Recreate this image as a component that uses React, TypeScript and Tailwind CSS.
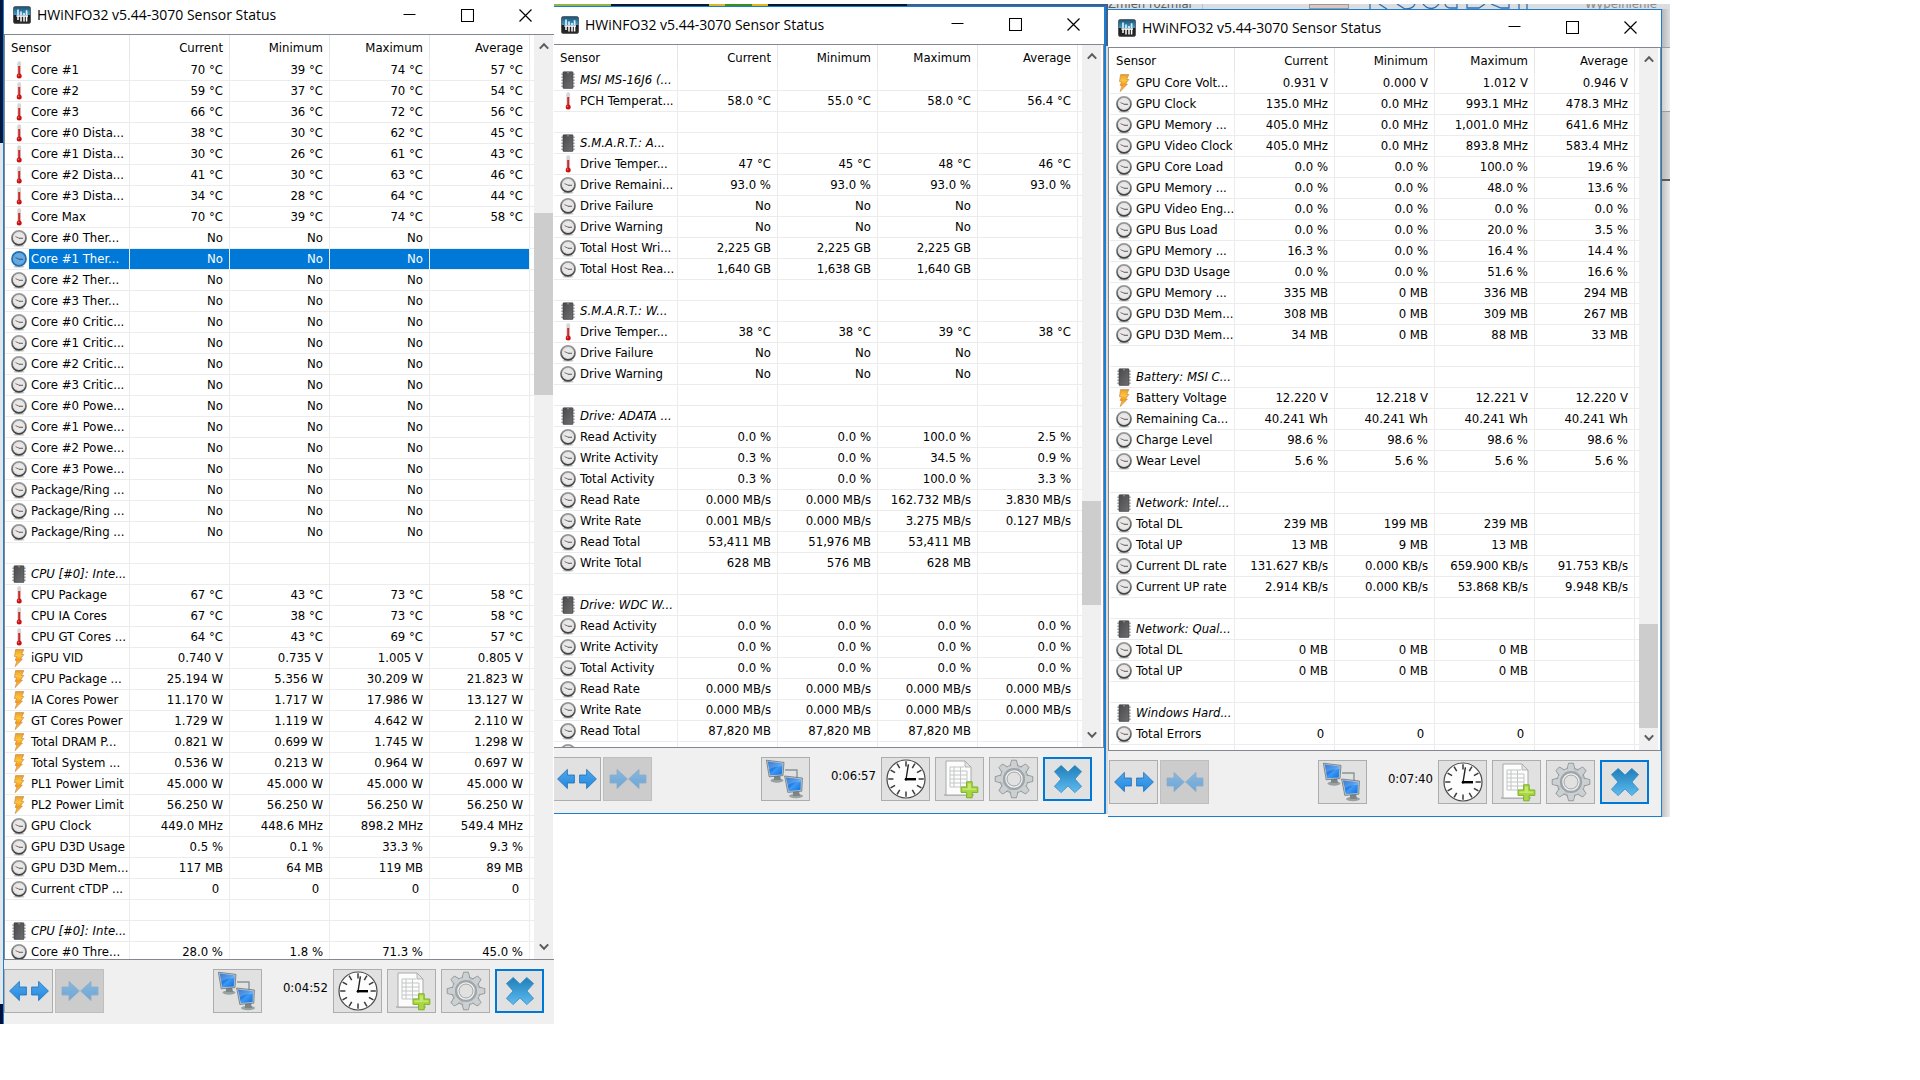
import React from "react";

type Kind = "temp" | "gauge" | "bolt" | "chip" | "blank";
type Row = [Kind, string, ...string[]];

const no = (name: string): Row => ["gauge", name, "No", "No", "No", ""];

const cpuRows: Row[] = [
  ["temp", "Core #1", "70 °C", "39 °C", "74 °C", "57 °C"],
  ["temp", "Core #2", "59 °C", "37 °C", "70 °C", "54 °C"],
  ["temp", "Core #3", "66 °C", "36 °C", "72 °C", "56 °C"],
  ["temp", "Core #0 Dista...", "38 °C", "30 °C", "62 °C", "45 °C"],
  ["temp", "Core #1 Dista...", "30 °C", "26 °C", "61 °C", "43 °C"],
  ["temp", "Core #2 Dista...", "41 °C", "30 °C", "63 °C", "46 °C"],
  ["temp", "Core #3 Dista...", "34 °C", "28 °C", "64 °C", "44 °C"],
  ["temp", "Core Max", "70 °C", "39 °C", "74 °C", "58 °C"],
  no("Core #0 Ther..."),
  no("Core #1 Ther..."),
  no("Core #2 Ther..."),
  no("Core #3 Ther..."),
  no("Core #0 Critic..."),
  no("Core #1 Critic..."),
  no("Core #2 Critic..."),
  no("Core #3 Critic..."),
  no("Core #0 Powe..."),
  no("Core #1 Powe..."),
  no("Core #2 Powe..."),
  no("Core #3 Powe..."),
  no("Package/Ring ..."),
  no("Package/Ring ..."),
  no("Package/Ring ..."),
  ["blank", ""],
  ["chip", "CPU [#0]: Inte..."],
  ["temp", "CPU Package", "67 °C", "43 °C", "73 °C", "58 °C"],
  ["temp", "CPU IA Cores", "67 °C", "38 °C", "73 °C", "58 °C"],
  ["temp", "CPU GT Cores ...", "64 °C", "43 °C", "69 °C", "57 °C"],
  ["bolt", "iGPU VID", "0.740 V", "0.735 V", "1.005 V", "0.805 V"],
  ["bolt", "CPU Package ...", "25.194 W", "5.356 W", "30.209 W", "21.823 W"],
  ["bolt", "IA Cores Power", "11.170 W", "1.717 W", "17.986 W", "13.127 W"],
  ["bolt", "GT Cores Power", "1.729 W", "1.119 W", "4.642 W", "2.110 W"],
  ["bolt", "Total DRAM P...", "0.821 W", "0.699 W", "1.745 W", "1.298 W"],
  ["bolt", "Total System ...", "0.536 W", "0.213 W", "0.964 W", "0.697 W"],
  ["bolt", "PL1 Power Limit", "45.000 W", "45.000 W", "45.000 W", "45.000 W"],
  ["bolt", "PL2 Power Limit", "56.250 W", "56.250 W", "56.250 W", "56.250 W"],
  ["gauge", "GPU Clock", "449.0 MHz", "448.6 MHz", "898.2 MHz", "549.4 MHz"],
  ["gauge", "GPU D3D Usage", "0.5 %", "0.1 %", "33.3 %", "9.3 %"],
  ["gauge", "GPU D3D Mem...", "117 MB", "64 MB", "119 MB", "89 MB"],
  ["gauge", "Current cTDP ...", "0 ", "0 ", "0 ", "0 "],
  ["blank", ""],
  ["chip", "CPU [#0]: Inte..."],
  ["gauge", "Core #0 Thre...", "28.0 %", "1.8 %", "71.3 %", "45.0 %"],
];

const driveRows: Row[] = [
  ["chip", "MSI MS-16J6 (..."],
  ["temp", "PCH Temperat...", "58.0 °C", "55.0 °C", "58.0 °C", "56.4 °C"],
  ["blank", ""],
  ["chip", "S.M.A.R.T.: A..."],
  ["temp", "Drive Temper...", "47 °C", "45 °C", "48 °C", "46 °C"],
  ["gauge", "Drive Remaini...", "93.0 %", "93.0 %", "93.0 %", "93.0 %"],
  no("Drive Failure"),
  no("Drive Warning"),
  ["gauge", "Total Host Wri...", "2,225 GB", "2,225 GB", "2,225 GB", ""],
  ["gauge", "Total Host Rea...", "1,640 GB", "1,638 GB", "1,640 GB", ""],
  ["blank", ""],
  ["chip", "S.M.A.R.T.: W..."],
  ["temp", "Drive Temper...", "38 °C", "38 °C", "39 °C", "38 °C"],
  no("Drive Failure"),
  no("Drive Warning"),
  ["blank", ""],
  ["chip", "Drive: ADATA ..."],
  ["gauge", "Read Activity", "0.0 %", "0.0 %", "100.0 %", "2.5 %"],
  ["gauge", "Write Activity", "0.3 %", "0.0 %", "34.5 %", "0.9 %"],
  ["gauge", "Total Activity", "0.3 %", "0.0 %", "100.0 %", "3.3 %"],
  ["gauge", "Read Rate", "0.000 MB/s", "0.000 MB/s", "162.732 MB/s", "3.830 MB/s"],
  ["gauge", "Write Rate", "0.001 MB/s", "0.000 MB/s", "3.275 MB/s", "0.127 MB/s"],
  ["gauge", "Read Total", "53,411 MB", "51,976 MB", "53,411 MB", ""],
  ["gauge", "Write Total", "628 MB", "576 MB", "628 MB", ""],
  ["blank", ""],
  ["chip", "Drive: WDC W..."],
  ["gauge", "Read Activity", "0.0 %", "0.0 %", "0.0 %", "0.0 %"],
  ["gauge", "Write Activity", "0.0 %", "0.0 %", "0.0 %", "0.0 %"],
  ["gauge", "Total Activity", "0.0 %", "0.0 %", "0.0 %", "0.0 %"],
  ["gauge", "Read Rate", "0.000 MB/s", "0.000 MB/s", "0.000 MB/s", "0.000 MB/s"],
  ["gauge", "Write Rate", "0.000 MB/s", "0.000 MB/s", "0.000 MB/s", "0.000 MB/s"],
  ["gauge", "Read Total", "87,820 MB", "87,820 MB", "87,820 MB", ""],
  ["gauge", ""],
];

const gpuRows: Row[] = [
  ["bolt", "GPU Core Volt...", "0.931 V", "0.000 V", "1.012 V", "0.946 V"],
  ["gauge", "GPU Clock", "135.0 MHz", "0.0 MHz", "993.1 MHz", "478.3 MHz"],
  ["gauge", "GPU Memory ...", "405.0 MHz", "0.0 MHz", "1,001.0 MHz", "641.6 MHz"],
  ["gauge", "GPU Video Clock", "405.0 MHz", "0.0 MHz", "893.8 MHz", "583.4 MHz"],
  ["gauge", "GPU Core Load", "0.0 %", "0.0 %", "100.0 %", "19.6 %"],
  ["gauge", "GPU Memory ...", "0.0 %", "0.0 %", "48.0 %", "13.6 %"],
  ["gauge", "GPU Video Eng...", "0.0 %", "0.0 %", "0.0 %", "0.0 %"],
  ["gauge", "GPU Bus Load", "0.0 %", "0.0 %", "20.0 %", "3.5 %"],
  ["gauge", "GPU Memory ...", "16.3 %", "0.0 %", "16.4 %", "14.4 %"],
  ["gauge", "GPU D3D Usage", "0.0 %", "0.0 %", "51.6 %", "16.6 %"],
  ["gauge", "GPU Memory ...", "335 MB", "0 MB", "336 MB", "294 MB"],
  ["gauge", "GPU D3D Mem...", "308 MB", "0 MB", "309 MB", "267 MB"],
  ["gauge", "GPU D3D Mem...", "34 MB", "0 MB", "88 MB", "33 MB"],
  ["blank", ""],
  ["chip", "Battery: MSI C..."],
  ["bolt", "Battery Voltage", "12.220 V", "12.218 V", "12.221 V", "12.220 V"],
  ["gauge", "Remaining Ca...", "40.241 Wh", "40.241 Wh", "40.241 Wh", "40.241 Wh"],
  ["gauge", "Charge Level", "98.6 %", "98.6 %", "98.6 %", "98.6 %"],
  ["gauge", "Wear Level", "5.6 %", "5.6 %", "5.6 %", "5.6 %"],
  ["blank", ""],
  ["chip", "Network: Intel..."],
  ["gauge", "Total DL", "239 MB", "199 MB", "239 MB", ""],
  ["gauge", "Total UP", "13 MB", "9 MB", "13 MB", ""],
  ["gauge", "Current DL rate", "131.627 KB/s", "0.000 KB/s", "659.900 KB/s", "91.753 KB/s"],
  ["gauge", "Current UP rate", "2.914 KB/s", "0.000 KB/s", "53.868 KB/s", "9.948 KB/s"],
  ["blank", ""],
  ["chip", "Network: Qual..."],
  ["gauge", "Total DL", "0 MB", "0 MB", "0 MB", ""],
  ["gauge", "Total UP", "0 MB", "0 MB", "0 MB", ""],
  ["blank", ""],
  ["chip", "Windows Hard..."],
  ["gauge", "Total Errors", "0 ", "0 ", "0 ", ""],
  ["blank", ""],
];

function Gradients() {
  return (
    <svg className="absolute h-0 w-0" aria-hidden="true">
      <defs>
        <linearGradient id="boltFill" x1="0" y1="0" x2="0" y2="1">
          <stop offset="0" stopColor="#e8a032" />
          <stop offset="0.35" stopColor="#ffc53a" />
          <stop offset="0.6" stopColor="#f79a1c" />
          <stop offset="1" stopColor="#ffd45a" />
        </linearGradient>
        <linearGradient id="logoFill" x1="0" y1="0" x2="0" y2="1">
          <stop offset="0" stopColor="#1d4f6e" />
          <stop offset="0.5" stopColor="#3f9cc8" />
          <stop offset="0.52" stopColor="#1a1a1a" />
          <stop offset="1" stopColor="#2b2b2b" />
        </linearGradient>
        <linearGradient id="chipFill" x1="0" y1="0" x2="1" y2="1">
          <stop offset="0" stopColor="#4a4a4d" />
          <stop offset="1" stopColor="#6f6f72" />
        </linearGradient>
        <linearGradient id="ringFill" x1="0" y1="0" x2="0" y2="1">
          <stop offset="0" stopColor="#9a9a9a" />
          <stop offset="1" stopColor="#404040" />
        </linearGradient>
        <linearGradient id="arrowFill" x1="0" y1="0" x2="0" y2="1">
          <stop offset="0" stopColor="#4fa6ec" />
          <stop offset="1" stopColor="#2389e0" />
        </linearGradient>
        <linearGradient id="screenFill" x1="0" y1="0" x2="1" y2="1">
          <stop offset="0" stopColor="#0a56c4" />
          <stop offset="0.5" stopColor="#2a86ea" />
          <stop offset="0.55" stopColor="#3f9af5" />
          <stop offset="1" stopColor="#0e6fe0" />
        </linearGradient>
        <linearGradient id="gearFill" x1="0" y1="0" x2="1" y2="1">
          <stop offset="0" stopColor="#e2e5e6" />
          <stop offset="0.5" stopColor="#b4b9bc" />
          <stop offset="1" stopColor="#dfe2e3" />
        </linearGradient>
        <linearGradient id="crossFill" x1="0" y1="0" x2="0" y2="1">
          <stop offset="0" stopColor="#1f7db8" />
          <stop offset="1" stopColor="#5ebcf2" />
        </linearGradient>
      </defs>
    </svg>
  );
}

function SensorIcon({ kind, selected }: { kind: Kind; selected?: boolean }) {
  if (kind === "blank") return null;
  return (
    <svg viewBox="0 0 16 18" className="h-[18px] w-4 shrink-0" aria-hidden="true">
      {kind === "temp" && (
        <>
          <rect x="6.3" y="0.3" width="3.8" height="14" rx="1.6" fill="#d6d6d6" />
          <rect x="7.2" y="5" width="2" height="9" fill="#cf2a2a" />
          <circle cx="8.2" cy="15" r="2.5" fill="#cb1010" />
          <circle cx="7.6" cy="14.4" r="0.8" fill="#e86a6a" />
        </>
      )}
      {kind === "gauge" && (
        <>
          <ellipse cx="8" cy="16.6" rx="5.5" ry="1.2" fill="#c9c9c9" />
          <circle cx="8" cy="8.9" r="7" fill={selected ? "#6aa9dc" : "#e9e9e9"} stroke={selected ? "#1f6fb4" : "url(#ringFill)"} strokeWidth="1.7" />
          <circle cx="8" cy="8.9" r="5.2" fill="none" stroke={selected ? "#5a9bd0" : "#c4c4c4"} strokeWidth="0.7" strokeDasharray="1 1.5" />
          <path d="M4.5 7.6 8.4 9.3" stroke={selected ? "#1c5d99" : "#8b5a50"} strokeWidth="0.9" />
          <path d="M8 9.3h4" stroke={selected ? "#1c5d99" : "#666"} strokeWidth="1.1" />
        </>
      )}
      {kind === "bolt" && (
        <path d="M4.6.6h8.2L10.6 5.5h2.2L9.4 10h2L4.2 17.6 6 11.4H4.2L5.6 7.6H3.5Z" fill="url(#boltFill)" stroke="#c98a3c" strokeWidth="0.7" />
      )}
      {kind === "chip" && (
        <>
          <path d="M1.2 3.2h13.6M1.2 6.2h13.6M1.2 9.2h13.6M1.2 12.2h13.6M1.2 15.2h13.6" stroke="#aeaeae" strokeWidth="1.5" />
          <rect x="3" y="0.8" width="10" height="16.6" rx="0.6" fill="url(#chipFill)" stroke="#3c3c3e" strokeWidth="0.6" />
          <circle cx="8" cy="1.6" r="0.9" fill="#8e8e8e" />
        </>
      )}
    </svg>
  );
}

function Logo() {
  return (
    <svg viewBox="0 0 18 18" className="h-[18px] w-[18px] shrink-0" aria-hidden="true">
      <rect x="0.4" y="0.4" width="17.2" height="17.2" rx="2.2" fill="url(#logoFill)" stroke="#4a4a4a" strokeWidth="0.8" />
      <path d="M5 3.6V9M8 5.6V9M11 7V9M13.6 4.2V9" stroke="#d7efff" strokeWidth="1.7" />
      <path d="M3.4 10h11.6M5 10v4M8 10v5.6M11 10v5.6M13.6 10v5.6" stroke="#fff" strokeWidth="1.5" />
    </svg>
  );
}

function Caption({ shape, label }: { shape: "min" | "max" | "close"; label: string }) {
  return (
    <button type="button" aria-label={label} className="flex h-full w-[58px] items-center justify-center">
      <svg viewBox="0 0 13 13" className="h-[13px] w-[13px]" fill="none" stroke="#000" strokeWidth="1">
        {shape === "min" && <path d="M.5 5.5h12" />}
        {shape === "max" && <path d="M.5.5h12v12H.5z" strokeWidth="1.1" />}
        {shape === "close" && <path d="M.5.5l12 12M12.5.5l-12 12" strokeWidth="1.2" />}
      </svg>
    </button>
  );
}

function Chevron({ up }: { up?: boolean }) {
  return (
    <svg viewBox="0 0 10 8" className="h-2 w-2.5" fill="none" stroke="#5c5c5c" strokeWidth="2" aria-hidden="true">
      <path d={up ? "M.8 6.6 5 2.2l4.2 4.4" : "M.8 1.4 5 5.8l4.2-4.4"} />
    </svg>
  );
}

function ArrowsIcon({ inward }: { inward?: boolean }) {
  return (
    <svg viewBox="0 0 40 24" className={inward ? "h-6 w-10 opacity-55" : "h-6 w-10"} aria-hidden="true">
      <g fill="url(#arrowFill)" stroke={inward ? "#5c93c4" : "#1c6db8"} strokeWidth="0.8" strokeLinejoin="round">
        {inward ? (
          <>
            <path d="M2 8h7V2.4L19.4 12 9 21.6V16H2Z" />
            <path d="M38 8h-7V2.4L20.6 12 31 21.6V16h7Z" />
          </>
        ) : (
          <>
            <path d="M.6 12 10.4 2.4V8h7v8h-7v5.6Z" />
            <path d="M39.4 12 29.6 2.4V8h-7v8h7v5.6Z" />
          </>
        )}
      </g>
    </svg>
  );
}

function NetworkIcon() {
  return (
    <svg viewBox="0 0 42 40" className="h-10 w-[42px]" aria-hidden="true">
      <path d="M20 11h12v10" fill="none" stroke="#8c9494" strokeWidth="1.4" />
      <ellipse cx="12" cy="21.5" rx="6.5" ry="2.2" fill="#9aa1a1" />
      <path d="M9 16h6l1 5H9Z" fill="#7d8585" />
      <path d="M1.4 1.2 19 3.4l-1 13.2-13.8 1.2Z" fill="#b9c6cc" stroke="#5c6a70" strokeWidth="0.7" />
      <path d="M2.8 2.6 17.6 4.5l-.8 10.9L5.2 16.2Z" fill="url(#screenFill)" />
      <path d="M2.8 2.6 17.6 4.5l-.2 2.7C12 7 7 8 4 11Z" fill="#fff" opacity="0.22" />
      <ellipse cx="31" cy="37" rx="7" ry="2.2" fill="#9aa1a1" />
      <path d="M28 32h6l1 5h-7Z" fill="#7d8585" />
      <path d="M19.6 17 37.4 19l-.6 13.2-14 1.2Z" fill="#b9c6cc" stroke="#5c6a70" strokeWidth="0.7" />
      <path d="M21 18.4 36 20.2l-.5 10.9-11.6.8Z" fill="url(#screenFill)" />
      <path d="M21 18.4 36 20.2l-.2 2.7C30.4 22.8 25 24 22.2 27Z" fill="#fff" opacity="0.22" />
    </svg>
  );
}

const ticks = [0, 30, 60, 90, 120, 150, 180, 210, 240, 270, 300, 330];

function ClockIcon() {
  return (
    <svg viewBox="0 0 40 40" className="h-10 w-10" aria-hidden="true">
      <circle cx="20" cy="20" r="19" fill="#fdfdfd" stroke="#4a4a4a" strokeWidth="1.2" />
      {ticks.map((a) => (
        <path key={a} d="M20 2.2v5.2" stroke="#3a3a3a" strokeWidth="1.5" transform={`rotate(${a} 20 20)`} />
      ))}
      <path d="M20 20.5 22.4 5.4" stroke="#222" strokeWidth="1.4" />
      <path d="M19 20.2h11" stroke="#000" strokeWidth="2.4" />
      <circle cx="20" cy="20.2" r="1.3" fill="#000" />
    </svg>
  );
}

function ReportIcon() {
  return (
    <svg viewBox="0 0 38 40" className="h-10 w-[38px]" aria-hidden="true">
      <path d="M3 36h30" stroke="#bdbdbd" strokeWidth="2" />
      <path d="M5 2h19l6 6v28H5Z" fill="#fcfcfc" stroke="#a9a9a9" strokeWidth="1" />
      <path d="M24 2v6h6Z" fill="#e3e3e3" stroke="#a9a9a9" strokeWidth="0.8" />
      <path d="M9 8h14M9 12h17M9 16h17M9 20h17M9 24h17M9 28h17M9 8v20M13 8v20M19.5 8v20M26 12v16" fill="none" stroke="#c3c7c7" strokeWidth="1" />
      <path d="M25.6 22.8h5.6v5.2h5.6v5.4h-5.6v5.4h-5.6v-5.4H20V28h5.6Z" fill="#a8d83f" stroke="#7fae2a" strokeWidth="1" />
      <path d="M27 24.4h2.8v5.2H35v1.4H21.6v-1.4H27Z" fill="#d3f08a" opacity="0.7" />
    </svg>
  );
}

const teeth = [0, 45, 90, 135, 180, 225, 270, 315];

function GearIcon() {
  return (
    <svg viewBox="0 0 40 40" className="h-10 w-10" aria-hidden="true">
      <g fill="url(#gearFill)" stroke="#8d9396" strokeWidth="0.9" strokeLinejoin="round">
        {teeth.map((a) => (
          <path key={a} d="M15.6 9 17.6 1.2h4.8L24.4 9Z" transform={`rotate(${a} 20 20)`} />
        ))}
        <circle cx="20" cy="20" r="14" />
      </g>
      {teeth.map((a) => (
        <path key={a} d="M16.2 9.6 18 2h4l1.8 7.6Z" fill="#cbd0d2" transform={`rotate(${a} 20 20)`} />
      ))}
      <circle cx="20" cy="20" r="9.6" fill="none" stroke="#9fa5a8" strokeWidth="3" />
      <circle cx="20" cy="20" r="8" fill="#e1e1e1" stroke="#f2f4f4" strokeWidth="1.4" />
      <circle cx="20" cy="20" r="7" fill="#e1e1e1" stroke="#8f9598" strokeWidth="0.8" />
    </svg>
  );
}

function CrossIcon() {
  return (
    <svg viewBox="0 0 30 30" className="h-[30px] w-[30px]" aria-hidden="true">
      <path d="M8.2 1.4 15 8l6.8-6.6 6.8 6.2L22 15l6.6 7.4-6.8 6.2L15 22l-6.8 6.6-6.8-6.2L8 15 1.4 7.6Z" fill="url(#crossFill)" stroke="#3a8bbd" strokeWidth="0.8" strokeLinejoin="round" />
    </svg>
  );
}

function ToolButton({ label, look = "normal", children }: { label: string; look?: "normal" | "off" | "focus"; children: React.ReactNode }) {
  const looks = {
    normal: "border border-[#adadad] bg-[#e1e1e1]",
    off: "border border-[#bfbfbf] bg-[#cccccc]",
    focus: "border-2 border-[#0078d7] bg-[#e1e1e1]",
  };
  return (
    <button
      type="button"
      aria-label={label}
      disabled={look === "off"}
      className={`flex h-11 w-[49px] shrink-0 items-center justify-center overflow-hidden ${looks[look]}`}
    >
      {children}
    </button>
  );
}

function SensorRow({ row, selected }: { row: Row; selected: boolean }) {
  const [kind, name, ...vals] = row;
  const cells = [0, 1, 2, 3].map((i) => vals[i] ?? "");
  const line = "border-b border-r border-[#ececec]";
  return (
    <tr className="h-[21px]">
      <td className={`p-0 ${line}`}>
        <div className="flex h-5 items-center pl-[6px]">
          <SensorIcon kind={kind} selected={selected} />
          <span
            className={`ml-[2px] flex h-5 grow items-center whitespace-pre pl-[2px] ${
              selected ? "bg-[#0078d7] text-white" : kind === "chip" ? "italic" : ""
            }`}
          >
            {name}
          </span>
        </div>
      </td>
      {cells.map((v, i) => (
        <td key={i} className={`whitespace-pre py-0 pl-0 pr-[6px] text-right ${line} ${selected ? "bg-[#0078d7] text-white" : ""}`}>
          {v}
        </td>
      ))}
      <td className="border-b border-[#ececec] p-0" />
    </tr>
  );
}

interface WindowProps {
  rows: Row[];
  time: string;
  selected?: number;
  frame: string;
  title: string;
  list: string;
  view: string;
  scroll: string;
  thumb: string;
  toolbar: string;
}

function SensorWindow({ rows, time, selected, frame, title, list, view, scroll, thumb, toolbar }: WindowProps) {
  return (
    <section className={`flex flex-col overflow-hidden bg-[#f0f0f0] ${frame}`}>
      <header className={`flex items-center bg-white ${title}`}>
        <Logo />
        <h2 className="ml-[6px] grow whitespace-nowrap font-['Open_Sans','Noto_Sans',sans-serif] text-[14px] leading-5">HWiNFO32 v5.44-3070 Sensor Status</h2>
        <Caption shape="min" label="Minimize" />
        <Caption shape="max" label="Maximize" />
        <Caption shape="close" label="Close" />
      </header>
      <div className={`flex overflow-hidden border-[#828790] bg-white ${list} ${view}`}>
        <div className="min-w-0 grow">
          <table className="w-full table-fixed border-separate border-spacing-0">
            <colgroup>
              <col />
              <col className="w-[100px]" />
              <col className="w-[100px]" />
              <col className="w-[100px]" />
              <col className="w-[100px]" />
              <col className="w-1" />
            </colgroup>
            <thead>
              <tr className="h-[25px]">
                <th scope="col" className="border-r border-[#e5e5e5] py-0 pl-[6px] pr-0 text-left font-normal">
                  Sensor
                </th>
                {["Current", "Minimum", "Maximum", "Average"].map((h) => (
                  <th key={h} scope="col" className="border-r border-[#e5e5e5] py-0 pl-0 pr-[6px] text-right font-normal">
                    {h}
                  </th>
                ))}
                <th className="p-0" />
              </tr>
            </thead>
            <tbody>
              {rows.map((r, i) => (
                <SensorRow key={i} row={r} selected={i === selected} />
              ))}
            </tbody>
          </table>
        </div>
        <div className={`flex w-[19px] shrink-0 flex-col items-center bg-[#f0f0f0] ${scroll}`}>
          <button type="button" aria-label="Scroll up" className="flex h-[21px] w-full shrink-0 items-center justify-center">
            <Chevron up />
          </button>
          <div className={`w-full bg-[#cdcdcd] ${thumb}`} />
          <button type="button" aria-label="Scroll down" className="mt-auto flex h-[18px] w-full shrink-0 items-start justify-center pt-[2px]">
            <Chevron />
          </button>
        </div>
      </div>
      <footer className={`flex items-start pt-[9px] ${toolbar}`}>
        <div className="flex gap-[2px]">
          <ToolButton label="Expand columns">
            <ArrowsIcon />
          </ToolButton>
          <ToolButton label="Shrink columns" look="off">
            <ArrowsIcon inward />
          </ToolButton>
        </div>
        <div className="ml-auto flex gap-[5px]">
          <ToolButton label="Remote monitoring">
            <NetworkIcon />
          </ToolButton>
          <span className="flex h-[38px] w-[61px] items-center justify-end">{time}</span>
          <ToolButton label="Reset clock">
            <ClockIcon />
          </ToolButton>
          <ToolButton label="Start logging">
            <ReportIcon />
          </ToolButton>
          <ToolButton label="Settings">
            <GearIcon />
          </ToolButton>
          <ToolButton label="Close sensors" look="focus">
            <CrossIcon />
          </ToolButton>
        </div>
      </footer>
    </section>
  );
}

export default function App() {
  return (
    <main className="grid min-h-screen grid-cols-[554fr_554fr_562fr_250fr] items-start overflow-hidden bg-white font-['DejaVu_Sans_Condensed','Noto_Sans',sans-serif] text-[13px] leading-4 text-black">
      <Gradients />

      <div className="flex">
        <div className="flex w-[3px] shrink-0 flex-col">
          <div className="h-[143px] bg-[#03173c]" />
          <div className="grow bg-[#e4e6e8]" />
          <div className="h-5 bg-[#03103c]" />
        </div>
        <SensorWindow
          rows={cpuRows}
          time="0:04:52"
          selected={9}
          frame="min-w-0 grow border-l border-[#1a7fd0]"
          title="h-[34px] pb-1 pl-[9px]"
          list="border-y border-l"
          view="h-[926px]"
          scroll="mr-px"
          thumb="mt-[157px] h-[182px]"
          toolbar="h-16 pr-[10px]"
        />
      </div>

      <div className="flex flex-col pt-1">
        <div className="flex h-[2px]">
          <div className="w-[57px] bg-[#8fb944]" />
          <div className="w-[98px] bg-[#0a1a33]" />
          <div className="w-[16px] bg-[#d9b92c]" />
          <div className="w-[27px] bg-[#3c8f1d]" />
          <div className="w-[16px] bg-[#e0b81c]" />
          <div className="w-[139px] bg-[#061733]" />
          <div className="grow bg-[#3c5f92]" />
        </div>
        <div className="flex">
          <SensorWindow
            rows={driveRows}
            time="0:06:57"
            frame="min-w-0 grow border-y border-r-2 border-[#1a7fd0]"
            title="h-[37px] pb-[2px] pl-[7px] pr-[2px]"
            list="border-y border-r"
            view="h-[704px]"
            scroll="mr-[2px]"
            thumb="mt-[435px] h-[104px]"
            toolbar="-ml-[2px] h-[65px] pr-3"
          />
          <div className="flex w-[2px] shrink-0 flex-col">
            <div className="h-10 bg-[#41608f]" />
            <div className="grow bg-[#dcdcdc]" />
          </div>
        </div>
      </div>

      <div className="flex flex-col pt-1">
        <div className="flex h-[5px] items-end overflow-hidden bg-[#dcdde0] text-[#5d5d5d]">
          <span className="w-[95px] shrink-0 border-r border-[#c3c3c3] leading-[10px]">Zmień rozmiar</span>
          <span className="ml-[106px] h-[5px] w-10 shrink-0 border border-[#9a9a9a] bg-[#d8c8c0]" />
          <svg viewBox="0 0 160 5" className="ml-5 h-[5px] w-40 shrink-0" fill="none" stroke="#2f6fae" strokeWidth="1.3" aria-hidden="true">
            <path d="M1 0v5M10 0l8 5M28 0l8 5q8 0 10-5M54 0q8 9 16 0M76 0q1 4 6 4h6V0M98 0v4h12l6-4M122 0l10 4h8V0M150 0v5M158 0v5" />
          </svg>
          <span className="ml-[56px] whitespace-nowrap leading-[10px] text-[#8a8a8a]">Wypełnienie</span>
        </div>
        <div className="flex">
          <SensorWindow
            rows={gpuRows}
            time="0:07:40"
            frame="min-w-0 grow border-y border-r border-[#1a7fd0]"
            title="h-[37px] pb-[2px] pl-[10px] pr-[2px]"
            list="border pl-px"
            view="h-[704px]"
            scroll="mr-[2px]"
            thumb="mt-[555px] h-[104px]"
            toolbar="h-[65px] pl-px pr-3"
          />
          <div className="flex w-2 shrink-0 flex-col">
            <div className="h-[39px] border-b border-[#9c9c9c] bg-linear-to-r from-[#b4b7ba] to-[#dcdee0]" />
            <div className="h-16 border-b border-[#9c9c9c] bg-linear-to-r from-[#cfcfcf] to-[#f2f2f2]" />
            <div className="h-[69px] border-b-2 border-[#5a5a5a] bg-linear-to-r from-[#b9b9b9] to-[#d8d8d8]" />
            <div className="grow bg-linear-to-r from-[#c0c0c0] to-[#ececec]" />
          </div>
        </div>
      </div>
    </main>
  );
}
